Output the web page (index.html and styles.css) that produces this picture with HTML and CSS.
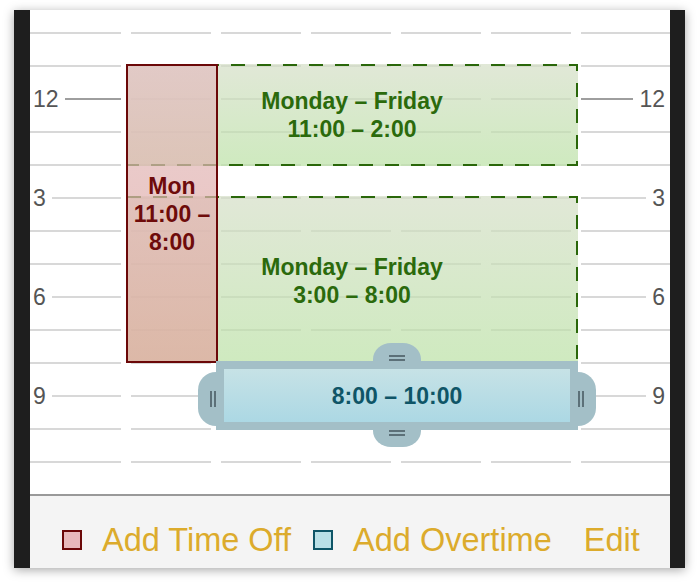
FILE: index.html
```html
<!DOCTYPE html>
<html lang="en">
<head>
  <meta charset="UTF-8">
  <meta name="viewport" content="width=device-width, initial-scale=1.0">
  <title>Schedule</title>
  <link rel="stylesheet" href="styles.css">
</head>
<body>
  <div class="window">
    <div class="screen">
      <div class="schedule">
        <div class="row"><div class="seg"></div><div class="seg"></div><div class="seg"></div><div class="seg"></div><div class="seg"></div><div class="seg"></div><div class="seg"></div></div>
        <div class="row"><div class="seg"></div><div class="seg"></div><div class="seg"></div><div class="seg"></div><div class="seg"></div><div class="seg"></div><div class="seg"></div></div>
        <div class="row noon">
          <div class="hour-mark"><span>12</span><div class="seg"></div></div>
          <div class="seg"></div><div class="seg"></div><div class="seg"></div><div class="seg"></div><div class="seg"></div>
          <div class="hour-mark end"><div class="seg"></div><span>12</span></div>
        </div>
        <div class="row"><div class="seg"></div><div class="seg"></div><div class="seg"></div><div class="seg"></div><div class="seg"></div><div class="seg"></div><div class="seg"></div></div>
        <div class="row"><div class="seg"></div><div class="seg"></div><div class="seg"></div><div class="seg"></div><div class="seg"></div><div class="seg"></div><div class="seg"></div></div>
        <div class="row">
          <div class="hour-mark"><span>3</span><div class="seg"></div></div>
          <div class="seg"></div><div class="seg"></div><div class="seg"></div><div class="seg"></div><div class="seg"></div>
          <div class="hour-mark end"><div class="seg"></div><span>3</span></div>
        </div>
        <div class="row"><div class="seg"></div><div class="seg"></div><div class="seg"></div><div class="seg"></div><div class="seg"></div><div class="seg"></div><div class="seg"></div></div>
        <div class="row"><div class="seg"></div><div class="seg"></div><div class="seg"></div><div class="seg"></div><div class="seg"></div><div class="seg"></div><div class="seg"></div></div>
        <div class="row">
          <div class="hour-mark"><span>6</span><div class="seg"></div></div>
          <div class="seg"></div><div class="seg"></div><div class="seg"></div><div class="seg"></div><div class="seg"></div>
          <div class="hour-mark end"><div class="seg"></div><span>6</span></div>
        </div>
        <div class="row"><div class="seg"></div><div class="seg"></div><div class="seg"></div><div class="seg"></div><div class="seg"></div><div class="seg"></div><div class="seg"></div></div>
        <div class="row"><div class="seg"></div><div class="seg"></div><div class="seg"></div><div class="seg"></div><div class="seg"></div><div class="seg"></div><div class="seg"></div></div>
        <div class="row">
          <div class="hour-mark"><span>9</span><div class="seg"></div></div>
          <div class="seg"></div><div class="seg"></div><div class="seg"></div><div class="seg"></div><div class="seg"></div>
          <div class="hour-mark end"><div class="seg"></div><span>9</span></div>
        </div>
        <div class="row"><div class="seg"></div><div class="seg"></div><div class="seg"></div><div class="seg"></div><div class="seg"></div><div class="seg"></div><div class="seg"></div></div>
        <div class="row"><div class="seg"></div><div class="seg"></div><div class="seg"></div><div class="seg"></div><div class="seg"></div><div class="seg"></div><div class="seg"></div></div>

        <!-- blocks: 33px per hour, columns start at 96px -->
        <div class="block shift" style="left: 96px; top: 54px; width: 452px; height: 102px;">
          <svg class="dash"><rect></rect></svg>
          <span>Monday – Friday<br>11:00 – 2:00</span>
        </div>
        <div class="block shift" style="left: 96px; top: 186px; width: 452px; height: 167px;">
          <svg class="dash"><rect></rect></svg>
          <span class="lower">Monday – Friday<br>3:00 – 8:00</span>
        </div>
        <div class="block time-off" style="left: 96px; top: 54px; width: 92px; height: 299px;">
          <span>Mon<br>11:00 –<br>8:00</span>
        </div>
        <div class="block overtime" style="left: 186px; top: 351px; width: 362px; height: 69px;">
          <span>8:00 – 10:00</span>
          <div class="handle handle-top"><i class="grip-h"></i></div>
          <div class="handle handle-bottom"><i class="grip-h"></i></div>
          <div class="handle handle-left"><i class="grip-v"></i></div>
          <div class="handle handle-right"><i class="grip-v"></i></div>
        </div>
      </div>

      <div class="footer">
        <span class="swatch swatch-off"></span>
        <span class="action">Add Time Off</span>
        <span class="swatch swatch-overtime"></span>
        <span class="action">Add Overtime</span>
        <span class="action edit">Edit</span>
      </div>
    </div>
  </div>
</body>
</html>
```

FILE: styles.css
```css
body {
  margin: 0;
  padding: 10px 0 17px 14px;
  background-color: #fff;
  font-family: "Liberation Sans", Arial, sans-serif;
}

.window {
  display: flex;
  box-sizing: border-box;
  width: 671px;
  height: 558px;
  padding: 0 15px 0 16px;
  background-color: #1e1e1e;
  box-shadow: 0 2px 10px rgba(0, 0, 0, 0.35);
}

.screen {
  flex: 1;
  display: flex;
  flex-direction: column;
  background-color: #fff;
}

.schedule {
  position: relative;
  box-sizing: border-box;
  height: 484px;
  padding-top: 22px;
}

.row {
  display: grid;
  grid-template-columns: 91px repeat(5, 80px) 89px;
  column-gap: 10px;
  height: 33px;
}

.seg {
  height: 2px;
  background-color: #d8d8d8;
}

.hour-mark {
  display: flex;
  align-items: center;
  height: 2px;
  padding-left: 3px;
}

.hour-mark .seg {
  flex: 1;
  margin-left: 6px;
}

.hour-mark.end {
  padding: 0 5px 0 0;
}

.hour-mark.end .seg {
  margin: 0 6px 0 0;
}

.hour-mark span {
  font-size: 23px;
  line-height: 23px;
  color: #555;
}

.noon .hour-mark .seg {
  background-color: #9e9e9e;
}

.block {
  position: absolute;
  box-sizing: border-box;
  display: flex;
  align-items: center;
  justify-content: center;
  text-align: center;
  font-size: 23px;
  font-weight: bold;
  line-height: 28px;
}

.shift {
  color: #2b6a0c;
  background: linear-gradient(rgba(212, 222, 198, 0.7), rgba(186, 225, 164, 0.7));
}

.shift .lower {
  margin-top: 2px;
}

.dash {
  position: absolute;
  top: 0;
  left: 0;
  width: 100%;
  height: 100%;
}

.dash rect {
  x: 1px;
  y: 1px;
  width: calc(100% - 2px);
  height: calc(100% - 2px);
  fill: none;
  stroke: #2a670a;
  stroke-width: 2;
  stroke-dasharray: 14 12;
}

.time-off {
  color: #6e0b0b;
  border: 2px solid #6b0808;
  background: linear-gradient(rgba(226, 190, 192, 0.72), rgba(225, 165, 158, 0.72));
}

.overtime {
  color: #0f5567;
  border: 8px solid #a3bfc7;
  background: linear-gradient(#c6e2e6, #acd8e4);
}

.handle {
  position: absolute;
  display: flex;
  background-color: #a3bfc7;
}

.handle-top {
  top: -26px;
  left: 149px;
  width: 48px;
  height: 18px;
  align-items: flex-end;
  justify-content: center;
  border-radius: 18px 18px 0 0 / 16px 16px 0 0;
}

.handle-bottom {
  bottom: -25px;
  left: 149px;
  width: 48px;
  height: 17px;
  align-items: flex-start;
  justify-content: center;
  border-radius: 0 0 18px 18px / 0 0 16px 16px;
}

.handle-left {
  top: 3px;
  left: -26px;
  width: 18px;
  height: 54px;
  align-items: center;
  justify-content: flex-end;
  border-radius: 18px 0 0 18px / 18px 0 0 18px;
}

.handle-right {
  top: 3px;
  right: -26px;
  width: 18px;
  height: 54px;
  align-items: center;
  justify-content: flex-start;
  border-radius: 0 18px 18px 0 / 0 18px 18px 0;
}

.grip-h {
  width: 16px;
  height: 2px;
  border-top: 2px solid #5c7078;
  border-bottom: 2px solid #5c7078;
}

.grip-v {
  width: 2px;
  height: 16px;
  border-left: 2px solid #5c7078;
  border-right: 2px solid #5c7078;
}

.footer {
  flex: 1;
  display: flex;
  align-items: center;
  padding: 16px 0 0 32px;
  border-top: 2px solid #999;
  background-color: #f4f4f4;
  font-size: 32.5px;
  color: #dcab2c;
}

.swatch {
  box-sizing: border-box;
  width: 20px;
  height: 20px;
  margin-right: 20px;
  border: 2px solid;
}

.swatch-off {
  border-color: #6b0808;
  background-color: #e8b9bb;
}

.swatch-overtime {
  border-color: #0e5567;
  background-color: #b9e0e7;
}

.action {
  line-height: 32px;
  margin-right: 22px;
}

.action.edit {
  margin-left: 10px;
  margin-right: 0;
}
```
